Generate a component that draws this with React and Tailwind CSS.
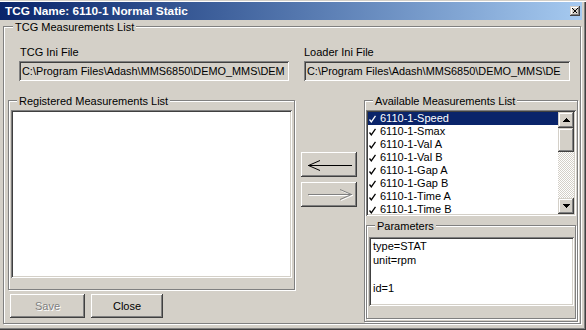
import React from 'react';

// classic win2000 bevels
const raised = 'shadow-[inset_-1px_-1px_0_#404040,inset_1px_1px_0_#fff,inset_-2px_-2px_0_#808080,inset_2px_2px_0_#d4d0c8]';
const raisedSmall = 'shadow-[inset_-1px_-1px_0_#404040,inset_1px_1px_0_#d4d0c8,inset_-2px_-2px_0_#808080,inset_2px_2px_0_#fff]';
const sunken = 'shadow-[inset_1px_1px_0_#808080,inset_-1px_-1px_0_#fff,inset_2px_2px_0_#404040,inset_-2px_-2px_0_#d4d0c8]';
const etched = 'border border-[#808080] shadow-[1px_1px_0_#fff,inset_1px_1px_0_#fff]';

const items = ['6110-1-Speed', '6110-1-Smax', '6110-1-Val A', '6110-1-Val B', '6110-1-Gap A', '6110-1-Gap B', '6110-1-Time A', '6110-1-Time B'];

const Group = ({ label, labelLeft = 'left-[8px]', className = '', children }) => (
  <div className={`relative ${etched} ${className}`}>
    <span className={`absolute top-[-6px] ${labelLeft} px-[2px] bg-[#d4d0c8] leading-[13px] whitespace-nowrap`}>{label}</span>
    {children}
  </div>
);

const Sunken = ({ className = '', inner = '', children }) => (
  <div className={`p-[2px] ${sunken} ${className}`}>
    <div className={`w-full h-full overflow-hidden ${inner}`}>{children}</div>
  </div>
);

const Button = ({ className = '', disabled, children }) => (
  <div className={`h-[24px] flex items-center justify-center bg-[#d4d0c8] ${raised} ${className} ${disabled ? 'text-[#808080] [text-shadow:1px_1px_0_#fff]' : ''}`}>
    {children}
  </div>
);

const Check = ({ color }) => (
  <svg width="7" height="8" viewBox="0 0 7 8" className="shrink-0 ml-[1px]">
    <path d="M0.5 4.5 L2.3 6.8 L6.5 0.8" fill="none" stroke={color} strokeWidth="1.3" />
  </svg>
);

const ScrollBtn = ({ up }) => (
  <div className={`h-[16px] bg-[#d4d0c8] ${raisedSmall} flex items-center justify-center`}>
    <svg width="7" height="4" shapeRendering="crispEdges">
      <path d={up ? 'M3.5 0 L7 4 L0 4Z' : 'M0 0 L7 0 L3.5 4Z'} fill="black" />
    </svg>
  </div>
);

export default function App() {
  return (
    <div className="w-[586px] h-[330px] overflow-hidden bg-[#d4d0c8] pt-[2px] pr-[4px] font-['Liberation_Sans',Arial,sans-serif] text-[11px] text-black shadow-[inset_0_1px_0_#d4d0c8,inset_0_2px_0_#fff,inset_-1px_-1px_0_#404040,inset_-2px_-2px_0_#808080]">
      <div className="h-[18px] flex items-center justify-between pl-[5px] pr-[2px] bg-linear-to-r from-[#0a246a] to-[#a6caf0]">
        <span className="text-white font-bold text-[11.8px] leading-[14px] whitespace-nowrap">TCG Name: 6110-1 Normal Static</span>
        <div className={`w-[10px] h-[10px] bg-[#d4d0c8] ${raisedSmall} flex items-center justify-center`}>
          <svg width="6" height="6" shapeRendering="crispEdges">
            <path d="M0.5 0.5 L5.5 5.5 M5.5 0.5 L0.5 5.5" stroke="black" strokeWidth="1.2" />
          </svg>
        </div>
      </div>

      <Group label="TCG Measurements List" labelLeft="left-[9px]" className="mt-[6px] ml-[3px] w-[578px] h-[298px]">
        <div className="pt-[19px] pl-[15px] flex gap-[15px]">
          <div className="w-[270px]">
            <div className="h-[13px] leading-[13px] pl-[1px]">TCG Ini File</div>
            <Sunken className="mt-[2px] h-[20px]" inner="bg-[#d4d0c8] flex items-center pl-[1px] leading-[13px] whitespace-nowrap">
              <span className="text-[10.9px]">C:\Program Files\Adash\MMS6850\DEMO_MMS\DEM</span>
            </Sunken>
          </div>
          <div className="w-[266px]">
            <div className="h-[13px] leading-[13px]">Loader Ini File</div>
            <Sunken className="mt-[2px] h-[20px]" inner="bg-[#d4d0c8] flex items-center pl-[1px] leading-[13px] whitespace-nowrap">
              <span className="text-[10.9px]">C:\Program Files\Adash\MMS6850\DEMO_MMS\DE</span>
            </Sunken>
          </div>
        </div>

        <div className="mt-[19px] pl-[4px] flex items-start">
          <div className="w-[287px]">
            <Group label="Registered Measurements List" className="h-[190px] pl-[2px] pt-[9px]">
              <Sunken className="w-[281px] h-[168px]" inner="bg-white" />
            </Group>
            <div className="mt-[4px] ml-[2px] flex gap-[6px]">
              <Button className="w-[75px]" disabled>Save</Button>
              <Button className="w-[72px]">Close</Button>
            </div>
          </div>

          <div className="ml-[6px] mt-[52px] w-[56px] flex flex-col gap-[5px]">
            <div className={`h-[25px] bg-[#d4d0c8] ${raised}`}>
              <svg width="56" height="25" className="block">
                <path d="M7 13.5 L51 13.5" stroke="black" />
                <polyline points="19,8.5 7.5,13.5 19,18.5" fill="none" stroke="black" />
              </svg>
            </div>
            <div className={`h-[25px] bg-[#d4d0c8] ${raised}`}>
              <svg width="56" height="25" className="block">
                <path d="M8 13.5 L52 13.5" stroke="#fff" />
                <polyline points="40,8.5 51.5,13.5 40,18.5" fill="none" stroke="#fff" />
                <path d="M7 12.5 L51 12.5" stroke="#808080" />
                <polyline points="39,7.5 50.5,12.5 39,17.5" fill="none" stroke="#808080" />
              </svg>
            </div>
          </div>

          <Group label="Available Measurements List" className="ml-[7px] w-[214px] h-[222px] pl-[1px] pt-[9px]">
            <Sunken className="w-[210px] h-[106px]" inner="flex">
              <div className="w-[190px] h-full bg-white">
                {items.map((it, i) => (
                  <div key={it} className={`h-[13px] flex items-center leading-[13px] whitespace-nowrap ${i === 0 ? 'bg-[#0a246a] text-white' : ''}`}>
                    <Check color={i === 0 ? '#fff' : '#000'} />
                    <span className="ml-[4px]">{it}</span>
                  </div>
                ))}
              </div>
              <div className="w-[16px] h-full flex flex-col">
                <ScrollBtn up />
                <div className={`h-[24px] bg-[#d4d0c8] ${raisedSmall}`} />
                <div className="flex-1 bg-[image:repeating-conic-gradient(#fff_0_25%,#d4d0c8_0_50%)] bg-[length:2px_2px]" />
                <ScrollBtn />
              </div>
            </Sunken>
            <Group label="Parameters" className="mt-[9px] w-[210px] h-[94px] pl-[2px] pt-[11px]">
              <Sunken className="w-[205px] h-[69px]" inner="bg-white pl-[2px] leading-[14px]">
                <div>type=STAT</div>
                <div>unit=rpm</div>
                <div>&nbsp;</div>
                <div>id=1</div>
              </Sunken>
            </Group>
          </Group>
        </div>
      </Group>
    </div>
  );
}
